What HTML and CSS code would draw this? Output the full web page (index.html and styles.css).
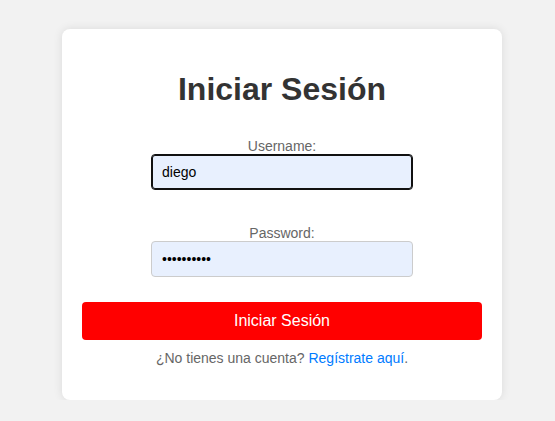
FILE: index.html
```
<!DOCTYPE html>
<html lang="es">
<head>
<meta charset="utf-8">
<title>Iniciar Sesión</title>
<link rel="stylesheet" href="styles.css">
</head>
<body>
<div class="page">
  <div class="card">
    <h1 class="title">Iniciar Sesión</h1>
    <form class="form">
      <div class="group group-user">
        <label class="label" for="username">Username:</label>
        <input class="input input-focus" id="username" type="text" value="diego">
      </div>
      <div class="group group-pass">
        <label class="label" for="password">Password:</label>
        <input class="input" id="password" type="password" value="diegodiego">
      </div>
      <button class="btn" type="button">Iniciar Sesión</button>
    </form>
    <p class="signup">¿No tienes una cuenta? <a class="link" href="#">Regístrate aquí</a>.</p>
  </div>
</div>
</body>
</html>
```
FILE: styles.css
```
html, body {
  margin: 0;
  padding: 0;
  background: #f2f2f2;
  font-family: "Liberation Sans", Arial, sans-serif;
}
.page {
  display: flex;
  padding: 29px 0 0 62px;
}
.card {
  width: 400px;
  padding: 20px;
  background: #fff;
  border-radius: 8px;
  box-shadow: 0 0 10px rgba(0, 0, 0, 0.1);
  text-align: center;
}
.title {
  margin: 22px 0 30px;
  font-size: 32px;
  font-weight: bold;
  color: #333;
}
.form {
  margin: 0;
}
.group {
  text-align: center;
}
.group-user {
  margin-bottom: 35px;
}
.group-pass {
  margin-bottom: 25px;
}
.label {
  display: block;
  font-size: 14px;
  line-height: 16px;
  color: #666;
}
.input {
  display: inline-block;
  vertical-align: top;
  width: 60%;
  padding: 9px 10px;
  margin: 0;
  font-family: "Liberation Sans", Arial, sans-serif;
  font-size: 14px;
  line-height: 16px;
  color: #000;
  background: #e8f0fe;
  border: 1px solid #ccc;
  border-radius: 4px;
  outline: none;
}
.input-focus {
  border-color: #111;
  box-shadow: inset 0 0 0 1px #111;
}
.btn {
  display: block;
  width: 100%;
  padding: 10px;
  border: none;
  border-radius: 4px;
  background: #ff0000;
  color: #fff;
  font-family: "Liberation Sans", Arial, sans-serif;
  font-size: 16px;
  line-height: 18px;
}
.signup {
  margin: 10px 0 14px;
  font-size: 14px;
  line-height: 16px;
  color: #666;
}
.link {
  color: #007bff;
  text-decoration: none;
}
```
